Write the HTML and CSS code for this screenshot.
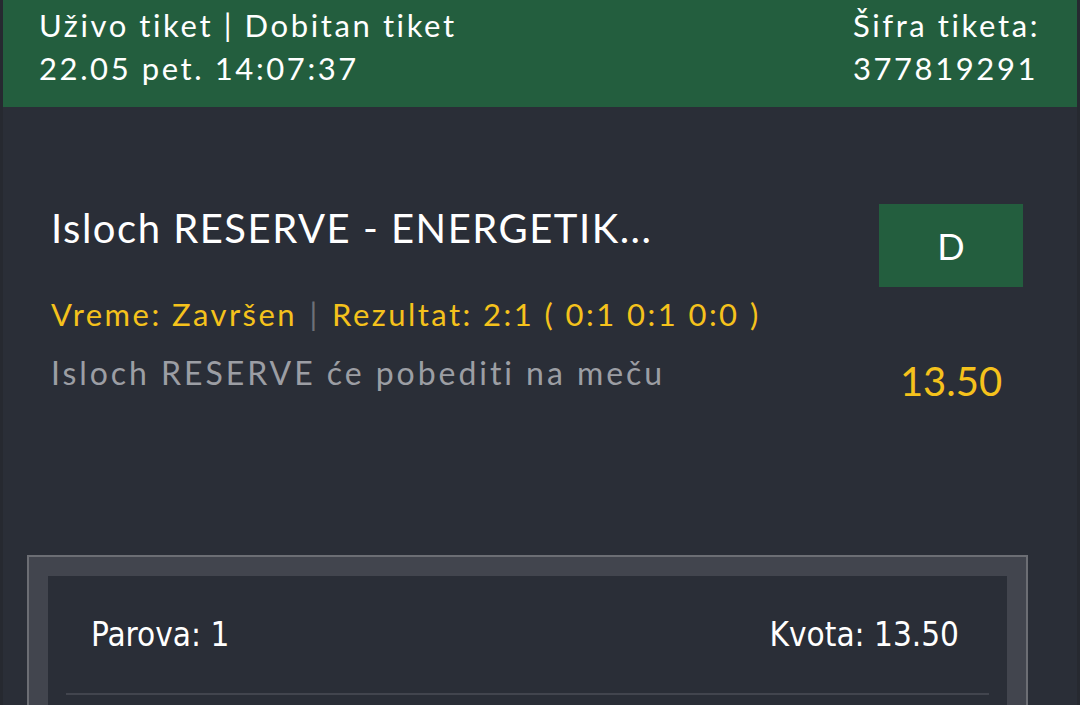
FILE: index.html
```html
<!DOCTYPE html>
<html lang="sr">
<head>
<meta charset="utf-8">
<title>Tiket</title>
<link rel="stylesheet" href="styles.css">
</head>
<body>
<div class="page">
  <header class="ticket-head">
    <div class="head-left">
      <div class="line">Uživo tiket | Dobitan tiket</div>
      <div class="line">22.05 pet. 14:07:37</div>
    </div>
    <div class="head-right">
      <div class="line">Šifra tiketa:</div>
      <div class="line">377819291</div>
    </div>
  </header>

  <section class="match">
    <div class="match-info">
      <div class="match-title">Isloch RESERVE - ENERGETIK...</div>
      <div class="match-meta">Vreme: Završen <span class="sep">|</span> Rezultat: 2:1 ( 0:1 0:1 0:0 )</div>
      <div class="match-pick">Isloch RESERVE će pobediti na meču</div>
    </div>
    <div class="match-side">
      <div class="tip">D</div>
      <div class="odd">13.50</div>
    </div>
  </section>

  <section class="summary">
    <div class="summary-inner">
      <div class="summary-row">
        <span>Parova: 1</span>
        <span>Kvota: 13.50</span>
      </div>
      <div class="divider"></div>
    </div>
  </section>
</div>
</body>
</html>
```

FILE: styles.css
```css
html, body {
  margin: 0;
  padding: 0;
  height: 100%;
  background: #262930;
  overflow: hidden;
}

.page {
  margin: 0 3px;
  min-height: 100%;
  background: #2a2e37;
  font-family: Lato, "Open Sans", sans-serif;
  color: #ffffff;
}

.ticket-head {
  height: 107px;
  background: #235e3e;
  display: flex;
  justify-content: space-between;
  padding: 4px 37px 0 36px;
  box-sizing: border-box;
  font-size: 31px;
  line-height: 43px;
  letter-spacing: 2.6px;
}

.match {
  display: flex;
  justify-content: space-between;
  align-items: flex-start;
  padding: 96px 54px 0 48px;
}

.match-title {
  font-size: 40px;
  line-height: 50px;
  letter-spacing: 1.5px;
}

.match-meta {
  margin-top: 41px;
  font-size: 31px;
  line-height: 40px;
  letter-spacing: 2.45px;
  color: #f5c21c;
}

.match-meta .sep {
  color: #6e7077;
  padding: 0 2px;
}

.match-pick {
  margin-top: 19px;
  font-size: 32px;
  line-height: 40px;
  letter-spacing: 2.95px;
  color: #9c9ea4;
}

.match-side {
  width: 144px;
  margin-top: 1px;
  display: flex;
  flex-direction: column;
  align-items: center;
}

.tip {
  width: 144px;
  height: 83px;
  background: #235e3e;
  display: flex;
  align-items: center;
  justify-content: center;
  font-size: 36px;
}

.odd {
  margin-top: 69px;
  font-size: 40px;
  line-height: 50px;
  color: #f5c21c;
}

.summary {
  margin: 149px 49px 0 24px;
  border: 2px solid #6c6e74;
  border-bottom: none;
  background: #42454e;
  padding: 19px 19px 0 19px;
}

.summary-inner {
  background: #2a2e37;
  padding: 0 18px;
  height: 200px;
}

.summary-row {
  height: 117px;
  display: flex;
  justify-content: space-between;
  align-items: center;
  padding: 0 30px 0 25px;
  font-family: "DejaVu Sans Condensed", "DejaVu Sans", sans-serif;
  font-size: 33px;
}

.divider {
  height: 2px;
  background: #42454e;
}
```
